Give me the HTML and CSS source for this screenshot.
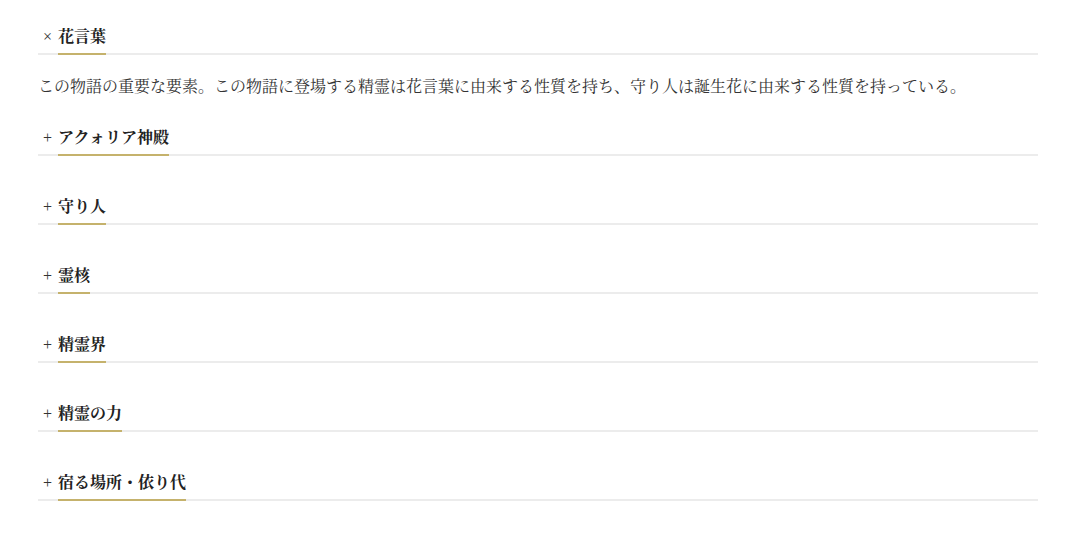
FILE: index.html
```html
<!DOCTYPE html>
<html lang="ja">
<head>
    <meta charset="UTF-8">
    <meta name="viewport" content="width=device-width, initial-scale=1.0">
    <title>用語集</title>
    <link rel="stylesheet" href="styles.css">
</head>
<body>
    <div class="glossary">
        <div class="item open">
            <div class="item-head">
                <span class="item-sign">×</span>
                <span class="item-title">花言葉</span>
            </div>
            <div class="item-body">
                <p>この物語の重要な要素。この物語に登場する精霊は花言葉に由来する性質を持ち、守り人は誕生花に由来する性質を持っている。</p>
            </div>
        </div>

        <div class="item">
            <div class="item-head">
                <span class="item-sign">+</span>
                <span class="item-title">アクォリア神殿</span>
            </div>
        </div>

        <div class="item">
            <div class="item-head">
                <span class="item-sign">+</span>
                <span class="item-title">守り人</span>
            </div>
        </div>

        <div class="item">
            <div class="item-head">
                <span class="item-sign">+</span>
                <span class="item-title">霊核</span>
            </div>
        </div>

        <div class="item">
            <div class="item-head">
                <span class="item-sign">+</span>
                <span class="item-title">精霊界</span>
            </div>
        </div>

        <div class="item">
            <div class="item-head">
                <span class="item-sign">+</span>
                <span class="item-title">精霊の力</span>
            </div>
        </div>

        <div class="item">
            <div class="item-head">
                <span class="item-sign">+</span>
                <span class="item-title">宿る場所・依り代</span>
            </div>
        </div>
    </div>
</body>
</html>
```

FILE: styles.css
```css
* { margin: 0; padding: 0; box-sizing: border-box; }
body {
    font-family: "Liberation Serif", "Noto Serif CJK JP", "Noto Sans CJK JP", serif;
    background: #fff;
    color: #333;
    font-size: 16px;
}
.glossary {
    width: 1000px;
    margin: 20px 35px 0 38px;
}
.item {
    margin-bottom: 34px;
}
.item.open {
    margin-bottom: 19px;
}
.item-head {
    display: flex;
    padding: 5px 0 0 5px;
    border-bottom: 2px solid #ececec;
    line-height: 24px;
    cursor: pointer;
}
.item-sign {
    width: 15px;
    color: #333;
    font-weight: normal;
}
.item-title {
    padding-bottom: 4px;
    margin-bottom: -2px;
    border-bottom: 2px solid #c5b26c;
    color: #222;
    font-weight: bold;
}
.item-body p {
    margin-top: 18px;
    line-height: 28.8px;
    color: #333;
}
```
